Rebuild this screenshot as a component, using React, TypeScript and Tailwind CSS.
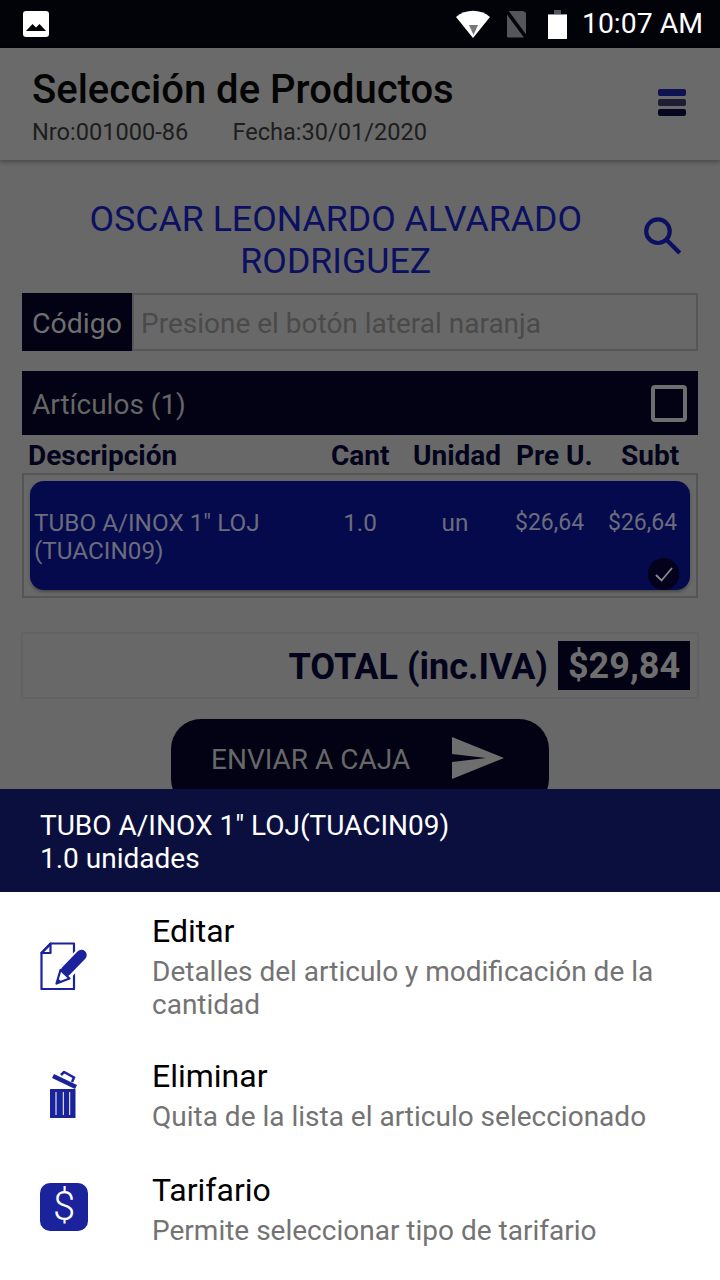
import React from 'react';

const font = { fontFamily: 'Roboto, sans-serif' };

function EditIcon() {
  return (
    <svg width="48" height="48" viewBox="0 0 48 48" fill="none">
      <path d="M11 1.500H34V47H1.500V11Z" stroke="#1a239c" strokeWidth="2.200" strokeLinejoin="round" />
      <path d="M1.500 11H10.500V1.500Z" stroke="#1a239c" strokeWidth="2.200" strokeLinejoin="round" />
      <path d="M25 31L41 14" stroke="#fff" strokeWidth="15" />
      <path d="M26 29L41.500 13" stroke="#1a239c" strokeWidth="10.500" strokeLinecap="round" />
      <path d="M20.500 28L29.500 36.500L16.500 41.500Z" fill="#fff" stroke="#1a239c" strokeWidth="2.200" strokeLinejoin="round" />
      <path d="M18 36.500L16 42L22 40Z" fill="#1a239c" />
    </svg>
  );
}

function TrashIcon() {
  return (
    <svg width="30" height="48" viewBox="0 0 30 48" fill="none">
      <path d="M4 5L27 16" stroke="#1a239c" strokeWidth="4.500" />
      <path d="M12 4L15 1L25 6.500L23 11" stroke="#1a239c" strokeWidth="2.500" />
      <rect x="1" y="18" width="25.500" height="29" fill="#1a239c" />
      <path d="M7 21V44M14.300 21V44M20.700 21V44" stroke="#fff" strokeWidth="1" />
    </svg>
  );
}

function SheetItem({ icon, title, desc, className }: { icon: React.ReactNode; title: string; desc: React.ReactNode; className: string }) {
  return (
    <div className={`flex ${className}`}>
      <div className="w-[152px] shrink-0 pl-10 flex items-center">{icon}</div>
      <div>
        <div className="text-[32px] leading-[40px] text-black">{title}</div>
        <div className="mt-[4px] text-[28px] leading-[33px] text-[#737373]">{desc}</div>
      </div>
    </div>
  );
}

export default function App() {
  return (
    <div className="relative w-[720px] h-[1280px] overflow-hidden bg-[#686868]" style={font}>
      {/* Status bar */}
      <div className="h-12 bg-[#020209] flex items-center pl-[23px] pr-[17px]">
        <svg width="26" height="26" viewBox="0 0 26 26" fill="none">
          <rect x="0" y="0" width="26" height="26" rx="3" fill="#fff" />
          <path d="M3 20L9.500 13L13 16.500L16.500 13L23 20Z" fill="#020209" />
        </svg>
        <div className="ml-auto flex items-center">
          <svg width="34" height="28" viewBox="0 0 34 28">
            <path d="M0 7C9.500 -1.500 24.500 -1.500 34 7L17 28Z" fill="#fff" />
            <path d="M13 15H22L17.500 25Z" fill="#777" />
          </svg>
          <svg width="25" height="28" viewBox="0 0 25 28" className="ml-[14px]">
            <path d="M3 3C3 2 4 1 5 1H18C20 1 21 2 22 3V26C22 27 21 27.500 20 27.500H5C4 27.500 3 27 3 26Z" fill="#55555c" />
            <path d="M1 -1L24 30" stroke="#020209" strokeWidth="3.500" />
          </svg>
          <svg width="19" height="29" viewBox="0 0 19 29" className="ml-[19px]">
            <path d="M6 0H13V4H6Z M0 4H19V4.500H0Z" fill="#55555c" />
            <path d="M0 4.500H19V29H0Z" fill="#fff" />
          </svg>
          <span className="ml-[15px] text-[28.400px] leading-none text-white">10:07 AM</span>
        </div>
      </div>

      {/* Header */}
      <div className="h-[112px] bg-[#6a6a6a] shadow-[0_2px_4px_rgba(0,0,0,0.3)] flex justify-between pl-8 pr-[34px]">
        <div>
          <div className="text-[40px] leading-[44px] mt-[20px] font-medium text-[#040404]">Selección de Productos</div>
          <div className="flex text-[23.600px] leading-[28px] mt-[6px] text-[#1d1d1d]">
            <span>Nro:001000-86</span>
            <span className="ml-[44px]">Fecha:30/01/2020</span>
          </div>
        </div>
        <div className="flex flex-col gap-[3px] mt-[41px] w-7">
          <div className="h-[7px] rounded-[2px] bg-[#0d1250]" />
          <div className="h-[7px] rounded-[2px] bg-[#1d1d33]" />
          <div className="h-[7px] rounded-[2px] bg-[#060621]" />
        </div>
      </div>

      {/* Client */}
      <div className="flex mt-[38px] pl-[39px] pr-[36px]">
        <div className="w-[600px] text-center text-[35.700px] leading-[42px] text-[#0b1060]">OSCAR LEONARDO ALVARADO RODRIGUEZ</div>
        <svg width="46" height="46" viewBox="0 0 24 24" fill="none" stroke="#0b1060" strokeWidth="2.200" className="ml-[6px] mt-[14px]">
          <circle cx="10" cy="10" r="6.200" />
          <path d="M14.500 14.500L21.500 21.500" />
        </svg>
      </div>

      {/* Codigo */}
      <div className="flex mt-[11px] mx-[22px] h-[58px]">
        <div className="w-[110px] bg-[#020214] text-[#6f6f6f] text-[28.500px] flex items-center justify-center pt-[4px]">Código</div>
        <div className="flex-1 border-2 border-[#575757] text-[#4a4a4a] text-[28px] flex items-center pl-[7px] pt-[3px]">Presione el botón lateral naranja</div>
      </div>

      {/* Articulos */}
      <div className="mt-[20px] mx-[22px] h-[64px] bg-[#020214] flex items-center justify-between pl-[10px] pr-[11px]">
        <span className="text-[28px] text-[#666] pt-[4px]">Artículos (1)</span>
        <div className="w-[36px] h-[37px] border-[4px] border-[#6e6e6e] rounded-[4px]" />
      </div>

      {/* Table header */}
      <div className="mx-[22px] h-[38px] text-[28px] font-bold leading-[42px] text-[#03031c]">
        <div className="flex">
          <span className="ml-[6px] w-[303px]">Descripción</span>
          <span className="w-[82px]">Cant</span>
          <span className="w-[103px]">Unidad</span>
          <span className="w-[105px]">Pre U.</span>
          <span>Subt</span>
        </div>
      </div>

      {/* Row */}
      <div className="mx-[22px] h-[125px] border-2 border-[#555] px-[6px] pt-[6px]">
        <div className="relative h-[109px] bg-[#040a4c] rounded-[14px] shadow-[0_2px_3px_rgba(0,0,0,0.3)] flex items-start pl-[4px] pt-[28px] text-[24.300px] leading-[28px] text-[#6c6c7c]">
          <div className="w-[301px]">TUBO A/INOX 1" LOJ<br />(TUACIN09)</div>
          <div className="w-[50px] text-center">1.0</div>
          <div className="w-[140px] text-center">un</div>
          <div className="w-[69px] text-center text-[23px] ml-[-10px]">$26,64</div>
          <div className="ml-[24px] text-[23px]">$26,64</div>
          <div className="absolute right-[11px] bottom-0 w-[31px] h-[32px] rounded-full bg-[#02021c] flex items-center justify-center">
            <svg width="20" height="20" viewBox="0 0 20 20" fill="none" stroke="#8a8a8a" strokeWidth="1.800"><path d="M2 11L7.500 16.500L18 4" /></svg>
          </div>
        </div>
      </div>

      {/* Total */}
      <div className="mt-[34px] mx-[21px] h-[67px] border-2 border-[#626262] flex items-center justify-end pr-[7px]">
        <span className="text-[36px] font-bold text-[#03031c] pt-[2px]">TOTAL (inc.IVA)</span>
        <span className="ml-[10px] w-[132px] h-[49px] mt-[-1px] bg-[#020214] text-[36px] font-bold text-[#6e6e6e] flex items-center justify-center pt-[2px]">$29,84</span>
      </div>

      {/* Button */}
      <div className="mt-[20px] mx-auto w-[378px] h-[90px] rounded-[30px] bg-[#020214] flex items-start pl-[40px] pt-[23px]">
        <span className="text-[28px] leading-[36px] text-[#686868]">ENVIAR A CAJA</span>
        <svg width="52" height="42" viewBox="0 0 52 42" className="ml-[42px] mt-[-5px]">
          <path d="M0 0L52 21L0 42V25L34 21L0 17Z" fill="#6e6e6e" />
        </svg>
      </div>

      {/* Bottom sheet */}
      <div className="absolute left-0 right-0 top-[789px] bottom-0 bg-white">
        <div className="h-[103px] bg-[#0b0f3e] pl-10 pt-[20px] text-[28px] leading-[33px] text-white">
          <div>TUBO A/INOX 1" LOJ(TUACIN09)</div>
          <div>1.0 unidades</div>
        </div>
        <SheetItem className="mt-[19px]" icon={<EditIcon />} title="Editar" desc={<>Detalles del articulo y modificación de la<br />cantidad</>} />
        <SheetItem className="mt-[35px]" icon={<div className="ml-[9px]"><TrashIcon /></div>} title="Eliminar" desc="Quita de la lista el articulo seleccionado" />
        <SheetItem className="mt-[37px]" icon={
          <div className="w-12 h-12 mb-[4px] rounded-[10px] bg-[#1a239c] flex items-center justify-center text-white text-[40px] font-light leading-none">$</div>
        } title="Tarifario" desc="Permite seleccionar tipo de tarifario" />
      </div>
    </div>
  );
}
